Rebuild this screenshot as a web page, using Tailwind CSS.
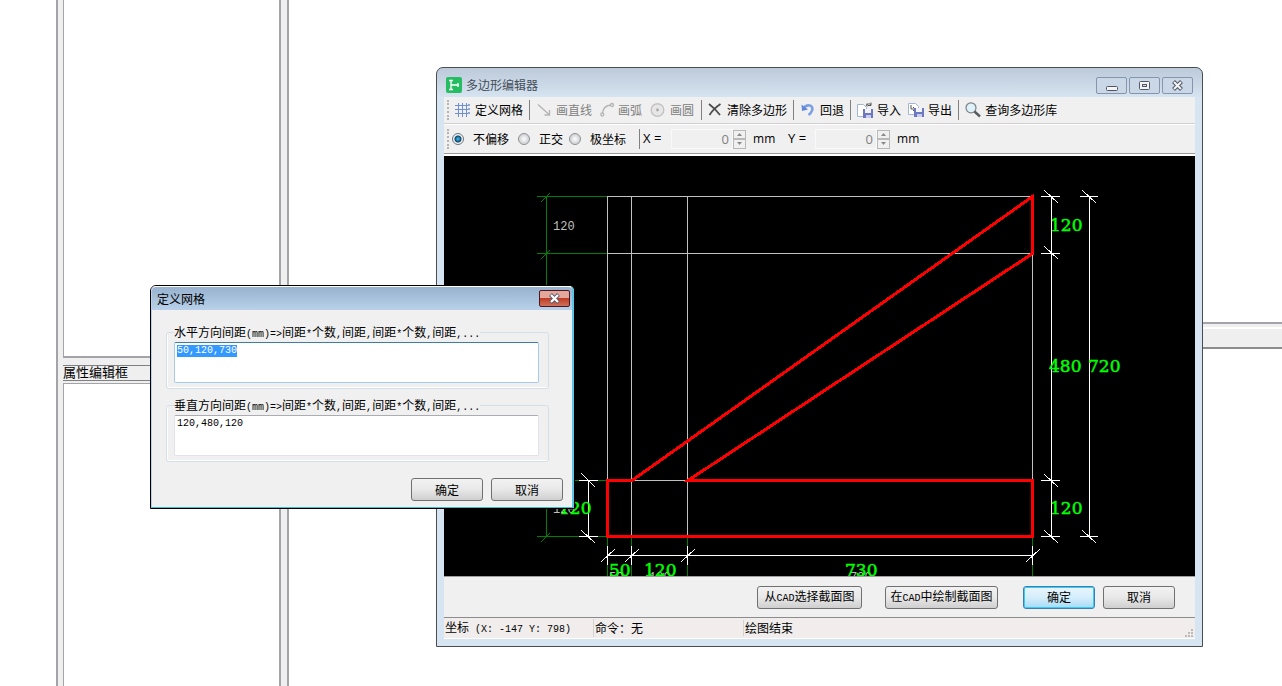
<!DOCTYPE html>
<html lang="zh-CN">
<head>
<meta charset="utf-8">
<title>多边形编辑器</title>
<script src="https://cdn.jsdelivr.net/npm/@tailwindcss/browser@4"></script>
</head>
<body class="h-screen overflow-hidden relative bg-white text-black text-xs font-['Noto_Sans_CJK_SC',sans-serif]">

<!-- Host application behind the windows -->
<div class="h-full flex">
  <div class="w-14 shrink-0"></div>
  <aside class="w-[233px] shrink-0 flex flex-col gap-[2px] bg-[#efefef] border-l-2 border-r-2 border-[#a3a3a8] pl-[5px] pr-[6px]">
    <div class="h-[358px] shrink-0 bg-white border border-t-0 border-r-2 border-b-2 border-[#a3a3a8]"></div>
    <h2 class="mt-[5px] h-4 shrink-0 border-y border-[#808080] leading-[12px] text-[13px] whitespace-nowrap">属性编辑框</h2>
    <div class="flex-1 bg-white border border-r-2 border-b-0 border-[#a3a3a8]"></div>
  </aside>
  <main class="flex-1 flex flex-col">
    <div class="h-[322px]"></div>
    <div class="h-[27px] bg-[#efefef] border-t-2 border-b-2 border-t-[#a3a3a8] border-b-[#8c8c8c]"><div class="h-[5px] border-b-2 border-white"></div></div>
    <div class="flex-1"></div>
  </main>
</div>

<!-- Polygon editor window -->
<section aria-label="多边形编辑器" class="absolute left-[436px] top-[67px] w-[767px] flex flex-col rounded-t-[7px] border border-[#4a4d52] bg-[#d7e4f2] px-[7px] pb-[7px] bg-linear-to-b from-[#bccad9] to-[#d7e4f2] to-[30px]">
  <header class="h-[29px] flex items-center">
    <svg class="ml-[2px] mt-[5px]" width="16" height="16" viewBox="0 0 16 16"><rect width="16" height="16" rx="2" fill="#25bd62"/><path d="M5 3.500v9M5 8h8M12 6v4M3 3.500h4M3 12.500h4" fill="none" stroke="#fff" stroke-width="1.300"/></svg>
    <h1 class="ml-1 mt-[5px] flex-1 text-[#454d58]">多边形编辑器</h1>
    <div class="flex gap-[2px] mt-[5px] mr-[2px]">
      <button aria-label="最小化" class="w-[31px] h-[17px] flex items-end justify-center pb-[2px] rounded-[2px] border border-[#8595ad] bg-[#c9d7e6]"><svg width="12" height="5" viewBox="0 0 12 5"><rect x=".5" y=".5" width="11" height="4" rx="1" fill="#f4f4f4" stroke="#4f5866"/></svg></button>
      <button aria-label="最大化" class="w-[31px] h-[17px] flex items-center justify-center rounded-[2px] border border-[#8595ad] bg-[#c9d7e6]"><svg width="11" height="9" viewBox="0 0 11 9"><rect x=".5" y=".5" width="10" height="8" rx="1" fill="#f4f4f4" stroke="#4f5866"/><rect x="3.500" y="3.500" width="4" height="2" fill="#d5e0ec" stroke="#4f5866"/></svg></button>
      <button aria-label="关闭" class="w-[31px] h-[17px] flex items-center justify-center rounded-[2px] border border-[#8595ad] bg-[#c9d7e6]"><svg width="13" height="11" viewBox="0 0 13 11"><path d="M2.500 1.500l8 8M10.500 1.500l-8 8" stroke="#4f5866" stroke-width="4"/><path d="M3 2l7 7M10 2l-7 7" stroke="#f4f4f4" stroke-width="2"/></svg></button>
    </div>
  </header>

  <div role="toolbar" class="h-[27px] flex items-center bg-[#f0f0f0] border-b border-[#cfcfcf] pl-[3px] whitespace-nowrap">
    <span class="h-5 w-0 border-l-2 border-dotted border-[#b5b5b5] mr-[6px]"></span>
    <button class="flex items-center gap-1"><svg width="16" height="16" viewBox="0 0 16 16" fill="none" stroke="#6f8fd0"><path d="M3.500 1v14M7.500 1v14M11.500 1v14M0 3.500h13M0 7.500h13M0 11.500h13"/><path d="M13.500 2.500h1v1h-1zM13.500 6.500h1v1h-1zM13.500 10.500h1v1h-1zM3 14.500h1M7 14.500h1M11 14.500h1"/></svg>定义网格</button>
    <span class="h-5 w-px bg-[#808080] ml-[6px] mr-[7px]"></span>
    <button disabled class="flex items-center gap-1 text-[#808080]"><svg width="15" height="16" viewBox="0 0 15 16" fill="none" stroke="#b4b4b4" stroke-width="1.300"><path d="M1 2.500l11 10M12.500 8v5h-5"/></svg>画直线</button>
    <button disabled class="flex items-center gap-[3px] text-[#808080] ml-2"><svg width="15" height="16" viewBox="0 0 15 16" fill="none" stroke="#b4b4b4" stroke-width="1.300"><path d="M2.500 11C3 6 6 3.500 11 3"/><circle cx="2.300" cy="12.500" r="1.500"/><circle cx="12" cy="3" r="1.500"/></svg>画弧</button>
    <button disabled class="flex items-center gap-1 text-[#808080] ml-2"><svg width="16" height="16" viewBox="0 0 16 16"><circle cx="7.500" cy="8" r="6.300" fill="#e6e6e6" stroke="#c3c3c3" stroke-width="1.400"/><circle cx="7.500" cy="8" r="1.400" fill="#a8a8a8"/></svg>画圆</button>
    <span class="h-5 w-px bg-[#808080] ml-[7px] mr-[6px]"></span>
    <button class="flex items-center gap-1"><svg width="15" height="16" viewBox="0 0 15 16" fill="none" stroke="#4d4d4d" stroke-width="1.800"><path d="M1 2c4 3 8 7 11 11M12.500 2C8 5 4 9 1.500 13"/></svg>清除多边形</button>
    <span class="h-5 w-px bg-[#808080] ml-[6px] mr-[6px]"></span>
    <button class="flex items-center gap-1"><svg width="16" height="16" viewBox="0 0 16 16"><path d="M3 6.500C7 1.500 14 3 12 8.500c-.6 2-2 3.500-3.500 4.500" fill="none" stroke="#7ba0e4" stroke-width="2.600"/><path d="M1.500 2.500l.5 6.500 6-1.500z" fill="#5f88d8"/></svg>回退</button>
    <span class="h-5 w-px bg-[#808080] ml-[6px] mr-[6px]"></span>
    <button class="flex items-center gap-1"><svg width="16" height="17" viewBox="0 0 16 17"><path d="M.5 2.500h6l3 3v9h-9z" fill="#fff" stroke="#a4b4d4"/><path d="M9 3.500c2-2 3-2 5-1M14 .5v3h-3M10 1.500v3" fill="none" stroke="#555"/><path d="M6 7h10v9H6z" fill="#6d78c0"/><path d="M8 7h6v4H8z" fill="#f3f3ff"/><path d="M9 13h5v3H9z" fill="#c9cdf0"/></svg>导入</button>
    <button class="flex items-center gap-1 ml-[7px]"><svg width="16" height="17" viewBox="0 0 16 17"><path d="M.5 1.500h7l3 3v8H.5z" fill="#fff" stroke="#a4b4d4"/><path d="M3 3v4h4M5 5l2 2-2 2" fill="none" stroke="#555"/><path d="M6 6h10v9H6z" fill="#6d78c0"/><path d="M8 6h6v4H8z" fill="#f3f3ff"/><path d="M9 12h5v3H9z" fill="#c9cdf0"/></svg>导出</button>
    <span class="h-5 w-px bg-[#808080] ml-[6px] mr-[6px]"></span>
    <button class="flex items-center gap-1"><svg width="16" height="16" viewBox="0 0 16 16"><circle cx="6" cy="5.800" r="5" fill="#dff2fa" stroke="#7b8288" stroke-width="1.200"/><path d="M9.500 9.500l5.500 5" stroke="#555c60" stroke-width="2.400"/></svg>查询多边形库</button>
  </div>

  <div role="toolbar" class="h-[30px] flex items-center bg-[#f0f0f0] border-t border-t-white border-b border-b-[#9a9a9a] pl-[3px] whitespace-nowrap">
    <span class="h-5 w-0 border-l-2 border-dotted border-[#b5b5b5] mr-[3px]"></span>
    <label class="flex items-center gap-[9px] mr-[9px]"><input type="radio" name="mode" checked class="appearance-none size-3 rounded-full border border-[#6d7580] bg-[radial-gradient(circle,#2fa8e0_0_1px,#12405f_3px,#eef2f5_4px)]">不偏移</label>
    <label class="flex items-center gap-[9px] mr-[6px]"><input type="radio" name="mode" class="appearance-none size-3 rounded-full border border-[#8e8f8f] bg-[radial-gradient(circle,#f6f6f6_1px,#d6d9dc_4px)]">正交</label>
    <label class="flex items-center gap-[9px] mr-[13px]"><input type="radio" name="mode" class="appearance-none size-3 rounded-full border border-[#8e8f8f] bg-[radial-gradient(circle,#f6f6f6_1px,#d6d9dc_4px)]">极坐标</label>
    <span class="h-5 w-px bg-[#808080] mr-[3px]"></span>
    <label for="xv" class="w-7 font-['Open_Sans',sans-serif] text-[13px]">X =</label>
    <input id="xv" disabled value="0" class="w-[62px] h-5 border border-[#fafafa] bg-[#f0f0f0] text-[#808080] text-right pr-[3px] font-['Open_Sans',sans-serif] text-[13px]">
    <span class="w-[13px] h-[19px] flex flex-col">
      <button disabled aria-label="增加X" class="flex-1 border border-[#b8b8b8] flex items-center justify-center"><svg width="5" height="3"><path d="M0 3L2.500 0 5 3z" fill="#8a8a8a"/></svg></button>
      <button disabled aria-label="减少X" class="flex-1 border border-[#b8b8b8] flex items-center justify-center"><svg width="5" height="3"><path d="M0 0h5L2.500 3z" fill="#8a8a8a"/></svg></button>
    </span>
    <span class="w-[35px] ml-[7px] font-['Open_Sans',sans-serif] text-xs">mm</span>
    <label for="yv" class="w-[27px] font-['Open_Sans',sans-serif] text-[13px]">Y =</label>
    <input id="yv" disabled value="0" class="w-[62px] h-5 border border-[#fafafa] bg-[#f0f0f0] text-[#808080] text-right pr-[3px] font-['Open_Sans',sans-serif] text-[13px]">
    <span class="w-[13px] h-[19px] flex flex-col">
      <button disabled aria-label="增加Y" class="flex-1 border border-[#b8b8b8] flex items-center justify-center"><svg width="5" height="3"><path d="M0 3L2.500 0 5 3z" fill="#8a8a8a"/></svg></button>
      <button disabled aria-label="减少Y" class="flex-1 border border-[#b8b8b8] flex items-center justify-center"><svg width="5" height="3"><path d="M0 0h5L2.500 3z" fill="#8a8a8a"/></svg></button>
    </span>
    <span class="ml-[7px] font-['Open_Sans',sans-serif] text-xs">mm</span>
  </div>

  <svg class="block w-full bg-black border-t-2 border-white box-content" viewBox="444 156 751 420" role="img" aria-label="截面图">
    <g fill="none" stroke="#008000" shape-rendering="crispEdges">
      <path d="M546.500 196V537M537 196.500H607M537 253.500H607M537 480.500H607M537 536.500H607M607.500 537V576M631.500 537V576M687.500 537V576M1032.500 537V576"/>
      <path d="M541 202l9-9M541 259l9-9M541 486l9-9M541 542l9-9"/>
    </g>
    <path d="M607 196.500H1033M607 253.500H1033M607 480.500H1033M607.500 196V536M631.500 196V536M687.500 196V536M1032.500 196V536" stroke="#c0c0c0" shape-rendering="crispEdges"/>
    <g stroke="#fff" shape-rendering="crispEdges" fill="none">
      <path d="M1051.500 196V537M1089.500 196V537M588.500 480V537M607 555.500H1033"/>
      <path d="M1041 196.500h19M1041 253.500h19M1041 480.500h19M1041 536.500h19M1080 196.500h18M1080 536.500h18M579 480.500h19M579 536.500h19M607.500 546v19M631.500 546v19M687.500 546v19M1032.500 546v19"/>
      <path d="M1044 190l14 13M1044 246l14 13M1044 474l14 13M1044 530l14 13M1082 190l14 13M1082 530l14 13M581 473l14 14M581 530l14 13M601 562l14 -13M625 562l14 -13M681 562l14 -13M1026 562l14 -13"/>
    </g>
    <g fill="#c0c0c0" class="font-['Liberation_Mono',monospace] text-xs">
      <text x="553" y="230">120</text><text x="553" y="513">120</text><text x="609" y="581">50</text><text x="649" y="581">120</text><text x="850" y="581">730</text>
    </g>
    <g fill="#00ff00" class="font-['DejaVu_Serif',serif] text-[17px]" stroke="#00ff00" stroke-width=".5">
      <text x="1050" y="231">120</text><text x="1049" y="372">480</text><text x="1088" y="372">720</text><text x="1050" y="514">120</text>
      <text x="559" y="514">120</text><text x="609" y="576">50</text><text x="644" y="576">120</text><text x="845" y="576">730</text>
    </g>
    <path d="M607.500 480.500H632L1032.500 196.500V253.500L688 480.500H1032.500V536.500H607.500Z" fill="none" stroke="#f00" stroke-width="3" shape-rendering="crispEdges"/>
  </svg>

  <div class="h-[41px] flex items-center justify-end bg-[#f0f0f0] border-t border-[#a0a0a0] pr-5">
    <button class="w-[105px] h-[23px] mr-[23px] whitespace-nowrap rounded-[3px] border border-[#707070] bg-linear-to-b from-[#f2f2f2] via-[#e8e8e8] to-[#cfcfcf]">从<span class="font-['Liberation_Mono',monospace] text-[10px]">CAD</span>选择截面图</button>
    <button class="w-[113px] h-[23px] mr-[25px] whitespace-nowrap rounded-[3px] border border-[#707070] bg-linear-to-b from-[#f2f2f2] via-[#e8e8e8] to-[#cfcfcf]">在<span class="font-['Liberation_Mono',monospace] text-[10px]">CAD</span>中绘制截面图</button>
    <button class="w-[72px] h-[23px] mr-2 rounded-[3px] border border-[#3c7fb1] ring-1 ring-inset ring-[#38cdf8] bg-linear-to-b from-[#e8f5fc] via-[#d5eefb] to-[#a8daf5]">确定</button>
    <button class="w-[72px] h-[23px] rounded-[3px] border border-[#707070] bg-linear-to-b from-[#f2f2f2] via-[#e8e8e8] to-[#cfcfcf]">取消</button>
  </div>
  <footer class="h-[22px] flex items-center bg-[#f0edec] border-t border-t-[#8c8c8c] border-b border-b-white whitespace-nowrap">
    <span class="w-[150px] pl-px border-r border-[#d5d2d1]">坐标<span class="font-['Liberation_Mono',monospace] text-[10px] whitespace-pre"> (X: -147 Y: 798)</span></span>
    <span class="w-[150px] pl-px border-r border-[#d5d2d1]">命令：无</span>
    <span class="flex-1 pl-px">绘图结束</span>
    <svg class="self-end mr-[2px] mb-px" width="9" height="9" viewBox="0 0 9 9" fill="#bdbab9"><path d="M7 1h2v2H7zM7 4h2v2H7zM7 7h2v2H7zM4 4h2v2H4zM4 7h2v2H4zM1 7h2v2H1z"/></svg>
  </footer>
</section>

<!-- Grid definition dialog -->
<section role="dialog" aria-label="定义网格" class="absolute left-[150px] top-[285px] w-[425px] rounded-t-[6px] border border-black bg-[#f0f0f0]">
  <div class="rounded-t-[5px] border border-l-[#b9d1ea] border-t-white border-r-2 border-r-[#5cc4e4] border-b-[#49b9cf]">
    <header class="h-[23px] flex items-center rounded-t-[4px] bg-linear-to-b from-[#97b2cf] to-[#b9d1ea] pl-[5px] pr-[2px]">
      <h2 class="flex-1">定义网格</h2>
      <button aria-label="关闭对话框" class="w-[31px] h-[17px] flex items-center justify-center rounded-[2px] border border-[#4a1820] bg-linear-to-b from-[#e5a79b] from-45% via-[#bf3b22] via-50% to-[#d0705a]"><svg width="13" height="11" viewBox="0 0 13 11"><path d="M2.500 1.500l8 8M10.500 1.500l-8 8" stroke="#5a5c70" stroke-width="4"/><path d="M3 2l7 7M10 2l-7 7" stroke="#fff" stroke-width="2.200"/></svg></button>
    </header>
    <form class="pt-[14px] pl-[14px] pr-[23px] flex flex-col gap-2">
      <fieldset class="border border-[#d5dfe8] rounded-[3px] pl-[7px] pr-[9px] pt-[2px] pb-[5px] shadow-[inset_1px_-1px_0_#fff]">
        <legend class="h-4 leading-4 whitespace-nowrap"><label for="h">水平方向间距<span class="font-['Liberation_Mono',monospace] text-[10px]">(mm)=&gt;</span>间距<span class="font-['Liberation_Mono',monospace] text-[10px]">*</span>个数<span class="font-['Liberation_Mono',monospace] text-[10px]">,</span>间距<span class="font-['Liberation_Mono',monospace] text-[10px]">,</span>间距<span class="font-['Liberation_Mono',monospace] text-[10px]">*</span>个数<span class="font-['Liberation_Mono',monospace] text-[10px]">,</span>间距<span class="font-['Liberation_Mono',monospace] text-[10px]">,...</span></label></legend>
        <textarea id="h" class="block w-full h-[41px] resize-none outline-none rounded-[2px] border border-[#a5cbe8] border-t-[#3d7bad] bg-white px-[2px] pt-[2px] leading-3 font-['Liberation_Mono',monospace] text-[10px] selection:bg-[#3399ff] selection:text-white">50,120,730</textarea>
      </fieldset>
      <fieldset class="border border-[#d5dfe8] rounded-[3px] pl-[7px] pr-[9px] pt-[2px] pb-[5px] shadow-[inset_1px_-1px_0_#fff]">
        <legend class="h-4 leading-4 whitespace-nowrap"><label for="v">垂直方向间距<span class="font-['Liberation_Mono',monospace] text-[10px]">(mm)=&gt;</span>间距<span class="font-['Liberation_Mono',monospace] text-[10px]">*</span>个数<span class="font-['Liberation_Mono',monospace] text-[10px]">,</span>间距<span class="font-['Liberation_Mono',monospace] text-[10px]">,</span>间距<span class="font-['Liberation_Mono',monospace] text-[10px]">*</span>个数<span class="font-['Liberation_Mono',monospace] text-[10px]">,</span>间距<span class="font-['Liberation_Mono',monospace] text-[10px]">,...</span></label></legend>
        <textarea id="v" class="block w-full h-[41px] resize-none outline-none rounded-[2px] border border-[#e2e3ea] border-t-[#abadb3] bg-white px-[2px] pt-[2px] leading-3 font-['Liberation_Mono',monospace] text-[10px]">120,480,120</textarea>
      </fieldset>
    </form>
    <div class="flex justify-end gap-2 pt-4 pb-[6px] pr-[9px]">
      <button class="w-[72px] h-[23px] rounded-[3px] border border-[#707070] bg-linear-to-b from-[#f2f2f2] via-[#e8e8e8] to-[#cfcfcf]">确定</button>
      <button class="w-[72px] h-[23px] rounded-[3px] border border-[#707070] bg-linear-to-b from-[#f2f2f2] via-[#e8e8e8] to-[#cfcfcf]">取消</button>
    </div>
  </div>
</section>
<script>
  const field = document.getElementById('h');
  field.focus();
  field.select();
</script>
</body>
</html>
